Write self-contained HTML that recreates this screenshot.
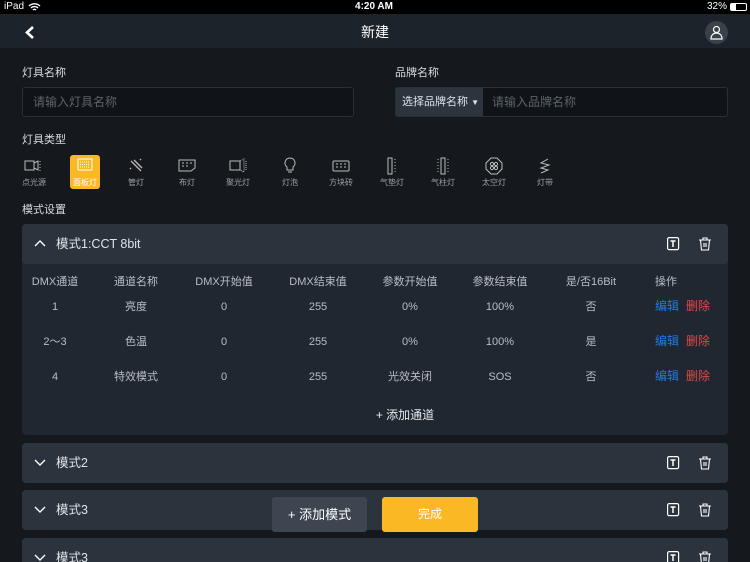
<!DOCTYPE html>
<html><head><meta charset="utf-8"><style>
*{margin:0;padding:0;box-sizing:border-box}
html,body{width:750px;height:562px;overflow:hidden}
body{background:#15191d;font-family:"Liberation Sans","Noto Sans CJK SC",sans-serif;color:#d8dce0;position:relative;line-height:14px}
.a{position:absolute}
.t{position:absolute;white-space:nowrap;line-height:14px}
.c{position:absolute;transform:translateX(-50%);white-space:nowrap;line-height:14px;height:14px}
.inp{position:absolute;background:#101317;border:1px solid #2a3038;border-radius:3px;height:30px;top:87px;font-size:12px;color:#5d646c;line-height:28px;padding-left:10px}
.ic{position:absolute;top:156px;width:20px;height:20px;transform:translateX(-50%)}
.lb{position:absolute;top:178px;font-size:8px;color:#9aa0a6;transform:translateX(-50%);white-space:nowrap;line-height:10px}
.hd{position:absolute;left:22px;width:706px;height:40px;background:#2b333d;border-radius:4px}
.hd .n{position:absolute;left:34px;top:13px;font-size:12.5px;color:#e0e3e6;line-height:14px}
.row{font-size:11px;color:#b8bec4}
</style></head><body>
<div class="a" style="left:0;top:0;width:750px;height:14px;background:#000"></div>
<div class="t" style="left:4px;top:0px;font-size:10px;color:#fff">iPad</div>
<svg class="a" style="left:28px;top:2px" width="13" height="10" viewBox="0 0 13 10"><path d="M1 4a8 8 0 0 1 11 0M3 6a5 5 0 0 1 7 0M5 8a2 2 0 0 1 3 0" stroke="#fff" stroke-width="1.4" fill="none"/></svg>
<div class="c" style="left:374px;top:0px;font-size:10px;color:#fff;font-weight:bold">4:20 AM</div>
<div class="t" style="left:707px;top:0px;font-size:10px;color:#fff">32%</div>
<div class="a" style="left:730px;top:3px;width:17px;height:8px;border:1px solid #fff;border-radius:2px"><div style="width:5px;height:100%;background:#fff"></div></div>
<div class="a" style="left:0;top:14px;width:750px;height:34px;background:#1d232a"></div>
<svg class="a" style="left:24px;top:25px" width="12" height="15"><path d="M9 2L3 7.5L9 13" stroke="#fff" stroke-width="2.6" fill="none"/></svg>
<div class="c" style="left:375px;top:25px;font-size:14px;color:#fff">新建</div>
<div class="a" style="left:705px;top:21px;width:23px;height:23px;border-radius:50%;background:#3a414b"></div>
<svg class="a" style="left:709px;top:25px" width="15" height="15"><circle cx="7.5" cy="4.5" r="3" stroke="#fff" fill="none" stroke-width="1.2"/><path d="M2 14c0-4 2.5-6 5.5-6s5.5 2 5.5 6z" stroke="#fff" fill="none" stroke-width="1.2"/></svg>

<div class="t" style="left:22px;top:66px;font-size:11px">灯具名称</div>
<div class="t" style="left:395px;top:66px;font-size:11px">品牌名称</div>
<div class="inp" style="left:22px;width:332px">请输入灯具名称</div>
<div class="inp" style="left:395px;width:333px;padding-left:96px">请输入品牌名称</div>
<div class="a" style="left:396px;top:88px;width:87px;height:28px;background:#2c343d;font-size:11px;color:#e0e3e6;line-height:28px;padding-left:6px">选择品牌名称 <span style="font-size:8px">▼</span></div>

<div class="t" style="left:22px;top:133px;font-size:11px">灯具类型</div>
<div class="a" style="left:70px;top:155px;width:30px;height:34px;background:#fbb825;border-radius:3px"></div>
<svg class="ic" style="left:34px" viewBox="0 0 20 20"><rect x="1" y="5" width="9" height="9" stroke="#bbb" fill="none"/><path d="M10 7l4-2v9l-4-2M16 5v1M16 8v1M16 11v1M16 14v1" stroke="#bbb" fill="none"/></svg>
<svg class="ic" style="left:85px" viewBox="0 0 20 20"><rect x="3" y="3" width="14" height="11" stroke="#fff" fill="none"/><path d="M5 6h10M5 8.5h10M5 11h10" stroke="#fff" stroke-dasharray="1 1"/></svg>
<svg class="ic" style="left:136px" viewBox="0 0 20 20"><path d="M5 5l10 10M8 4l8 8M4 12l1 1M14 4l1-1" stroke="#bbb" stroke-width="1.3"/></svg>
<svg class="ic" style="left:187px" viewBox="0 0 20 20"><path d="M2 4h16v8l-4 3H2z" stroke="#bbb" fill="none"/><path d="M5 7h2M9 7h2M13 7h2M5 10h2M9 10h2" stroke="#bbb"/></svg>
<svg class="ic" style="left:238px" viewBox="0 0 20 20"><rect x="2" y="5" width="10" height="9" stroke="#bbb" fill="none"/><path d="M12 5l4-2v13l-4-2M18 5v10" stroke="#bbb" fill="none" stroke-dasharray="1 1"/></svg>
<svg class="ic" style="left:290px" viewBox="0 0 20 20"><path d="M10 2a5 5 0 0 0-3 9v3h6v-3a5 5 0 0 0-3-9zM8 16h4" stroke="#bbb" fill="none"/></svg>
<svg class="ic" style="left:341px" viewBox="0 0 20 20"><rect x="2" y="5" width="16" height="10" rx="1" stroke="#bbb" fill="none"/><path d="M5 8h2M9 8h2M13 8h2M5 11h2M9 11h2M13 11h2" stroke="#bbb"/></svg>
<svg class="ic" style="left:392px" viewBox="0 0 20 20"><rect x="6" y="2" width="4" height="16" stroke="#bbb" fill="none"/><path d="M13 3v14" stroke="#bbb" stroke-dasharray="1 2"/></svg>
<svg class="ic" style="left:443px" viewBox="0 0 20 20"><rect x="8" y="2" width="4" height="16" stroke="#bbb" fill="none"/><path d="M5 3v14M15 3v14" stroke="#bbb" stroke-dasharray="1 2"/></svg>
<svg class="ic" style="left:494px" viewBox="0 0 20 20"><path d="M7 2h6l5 5v6l-5 5H7l-5-5V7z" stroke="#bbb" fill="none"/><circle cx="8" cy="8" r="1.6" stroke="#bbb" fill="none"/><circle cx="12" cy="8" r="1.6" stroke="#bbb" fill="none"/><circle cx="8" cy="12" r="1.6" stroke="#bbb" fill="none"/><circle cx="12" cy="12" r="1.6" stroke="#bbb" fill="none"/></svg>
<svg class="ic" style="left:545px" viewBox="0 0 20 20"><path d="M13 3L6 7l8 2-8 3 7 2-7 3" stroke="#bbb" fill="none"/></svg>
<div class="lb" style="left:34px">点光源</div><div class="lb" style="left:85px;color:#fff">面板灯</div><div class="lb" style="left:136px">管灯</div><div class="lb" style="left:187px">布灯</div><div class="lb" style="left:238px">聚光灯</div><div class="lb" style="left:290px">灯泡</div><div class="lb" style="left:341px">方块砖</div><div class="lb" style="left:392px">气垫灯</div><div class="lb" style="left:443px">气柱灯</div><div class="lb" style="left:494px">太空灯</div><div class="lb" style="left:545px">灯带</div>

<div class="t" style="left:22px;top:203px;font-size:11px">模式设置</div>

<div class="a" style="left:22px;top:224px;width:706px;height:211px;background:#212730;border-radius:4px"></div>
<div class="hd" style="top:224px"><svg class="a" style="left:12px;top:15px" width="12" height="8"><path d="M1 7l5-5 5 5" stroke="#fff" stroke-width="1.4" fill="none"/></svg><div class="n">模式1:CCT 8bit</div></div>

<div class="row">
<div class="c" style="left:55px;top:275px">DMX通道</div><div class="c" style="left:136px;top:275px">通道名称</div><div class="c" style="left:224px;top:275px">DMX开始值</div><div class="c" style="left:318px;top:275px">DMX结束值</div><div class="c" style="left:410px;top:275px">参数开始值</div><div class="c" style="left:500px;top:275px">参数结束值</div><div class="c" style="left:591px;top:275px">是/否16Bit</div><div class="t" style="left:655px;top:275px">操作</div>

<div class="c" style="left:55px;top:300px">1</div><div class="c" style="left:136px;top:300px">亮度</div><div class="c" style="left:224px;top:300px">0</div><div class="c" style="left:318px;top:300px">255</div><div class="c" style="left:410px;top:300px">0%</div><div class="c" style="left:500px;top:300px">100%</div><div class="c" style="left:591px;top:300px">否</div>
<div class="c" style="left:55px;top:335px">2～3</div><div class="c" style="left:136px;top:335px">色温</div><div class="c" style="left:224px;top:335px">0</div><div class="c" style="left:318px;top:335px">255</div><div class="c" style="left:410px;top:335px">0%</div><div class="c" style="left:500px;top:335px">100%</div><div class="c" style="left:591px;top:335px">是</div>
<div class="c" style="left:55px;top:370px">4</div><div class="c" style="left:136px;top:370px">特效模式</div><div class="c" style="left:224px;top:370px">0</div><div class="c" style="left:318px;top:370px">255</div><div class="c" style="left:410px;top:370px">光效关闭</div><div class="c" style="left:500px;top:370px">SOS</div><div class="c" style="left:591px;top:370px">否</div>
</div>
<div style="font-size:12px">
<div class="t" style="left:655px;top:299px;color:#1e7be6">编辑</div><div class="t" style="left:686px;top:299px;color:#e04848">删除</div>
<div class="t" style="left:655px;top:334px;color:#1e7be6">编辑</div><div class="t" style="left:686px;top:334px;color:#e04848">删除</div>
<div class="t" style="left:655px;top:369px;color:#1e7be6">编辑</div><div class="t" style="left:686px;top:369px;color:#e04848">删除</div>
</div>
<div class="c" style="left:405px;top:408px;font-size:12px;color:#e6e8ea">+ 添加通道</div>

<div class="hd" style="top:443px"><svg class="a" style="left:12px;top:16px" width="12" height="8"><path d="M1 1l5 5 5-5" stroke="#fff" stroke-width="1.4" fill="none"/></svg><div class="n">模式2</div></div>
<div class="hd" style="top:490px"><svg class="a" style="left:12px;top:16px" width="12" height="8"><path d="M1 1l5 5 5-5" stroke="#fff" stroke-width="1.4" fill="none"/></svg><div class="n">模式3</div></div>
<div class="hd" style="top:538px"><svg class="a" style="left:12px;top:16px" width="12" height="8"><path d="M1 1l5 5 5-5" stroke="#fff" stroke-width="1.4" fill="none"/></svg><div class="n">模式3</div></div>

<svg width="0" height="0" style="position:absolute"><defs>
<g id="ti"><rect x="0.6" y="0.6" width="11" height="12" rx="1.5" stroke="#fff" fill="none" stroke-width="1.2"/><path d="M3.5 4h5M6 4v6" stroke="#fff" stroke-width="1.5"/></g>
<g id="tr"><path d="M0 3h12M4 3V1h4v2M1.5 3l1 10h7l1-10M5 6v4M7 6v4" stroke="#fff" fill="none" stroke-width="1.1"/></g>
</defs></svg>
<svg class="a" style="left:667px;top:237px" width="13" height="14"><use href="#ti"/></svg><svg class="a" style="left:699px;top:237px" width="13" height="14"><use href="#tr"/></svg>
<svg class="a" style="left:667px;top:456px" width="13" height="14"><use href="#ti"/></svg><svg class="a" style="left:699px;top:456px" width="13" height="14"><use href="#tr"/></svg>
<svg class="a" style="left:667px;top:503px" width="13" height="14"><use href="#ti"/></svg><svg class="a" style="left:699px;top:503px" width="13" height="14"><use href="#tr"/></svg>
<svg class="a" style="left:667px;top:551px" width="13" height="14"><use href="#ti"/></svg><svg class="a" style="left:699px;top:551px" width="13" height="14"><use href="#tr"/></svg>

<div class="a" style="left:272px;top:497px;width:95px;height:35px;background:#3d4650;border-radius:3px;color:#fff;font-size:13px;text-align:center;line-height:35px">+ 添加模式</div>
<div class="a" style="left:382px;top:497px;width:96px;height:35px;background:#fbb825;border-radius:3px;color:#fff;font-size:12px;text-align:center;line-height:35px">完成</div>
</body></html>
